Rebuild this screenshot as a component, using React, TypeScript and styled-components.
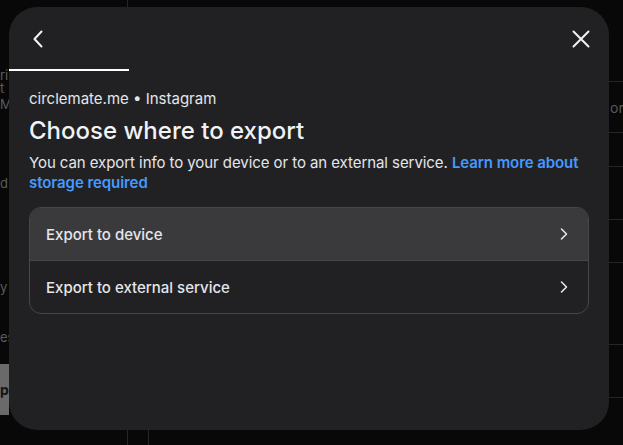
import styled, { createGlobalStyle } from "styled-components";

const GlobalStyle = createGlobalStyle`
  html, body {
    margin: 0;
    padding: 0;
    background: #080808;
    font-family: Inter, "Noto Sans", Roboto, sans-serif;
    -webkit-font-smoothing: antialiased;
  }
  * { box-sizing: border-box; }
`;

const ChevronLeft = () => (
  <svg width="20" height="20" viewBox="0 0 20 20" fill="none">
    <path d="M8.5 2.5 1.5 10l7 7.5" stroke="currentColor" strokeWidth="2" strokeLinecap="round" strokeLinejoin="round" />
  </svg>
);

const CloseIcon = () => (
  <svg width="20" height="20" viewBox="0 0 20 20" fill="none">
    <path d="M2.5 2.5l15 15M17.5 2.5l-15 15" stroke="currentColor" strokeWidth="2" strokeLinecap="round" />
  </svg>
);

const ChevronRight = () => (
  <svg width="10" height="14" viewBox="0 0 10 14" fill="none">
    <path d="M2.5 2 7.5 7l-5 5" stroke="currentColor" strokeWidth="1.6" strokeLinecap="round" strokeLinejoin="round" />
  </svg>
);

// slivers of the page that stay visible around the dialog
const leftEdge = [
  { text: "ri", gap: 69 },
  { text: "t", gap: 0 },
  { text: "M", gap: 3 },
  { text: "d", gap: 66 },
  { text: "y", gap: 91 },
  { text: "es", gap: 37 },
];

const rightRows = [82, 51, 34, 53, 43, 82, 53];

const App = () => {
  return (
    <>
      <GlobalStyle />
      <Page>
        <LeftRail>
          {leftEdge.map((item, i) => (
            <RailText key={i} $gap={item.gap}>
              {item.text}
            </RailText>
          ))}
          <RailButton>p</RailButton>
        </LeftRail>
        <Content>
          <NavColumn />
          <NarrowColumn />
          <div />
        </Content>
        <RightRail>
          {rightRows.map((h, i) => (
            <RailRow key={i} $height={h}>
              {i === 1 ? "or" : ""}
            </RailRow>
          ))}
        </RightRail>
      </Page>

      <Overlay>
        <Dialog>
          <Header>
            <IconButton aria-label="Back">
              <ChevronLeft />
            </IconButton>
            <IconButton aria-label="Close">
              <CloseIcon />
            </IconButton>
          </Header>
          <TabLine />
          <Body>
            <Account>circlemate.me • Instagram</Account>
            <Title>Choose where to export</Title>
            <Description>
              You can export info to your device or to an external service.{" "}
              <LearnMore href="#">Learn more about storage required</LearnMore>
            </Description>
            <OptionList>
              <Option $active>
                <span>Export to device</span>
                <ChevronRight />
              </Option>
              <Option>
                <span>Export to external service</span>
                <ChevronRight />
              </Option>
            </OptionList>
          </Body>
        </Dialog>
      </Overlay>
    </>
  );
};

export default App;

const Page = styled.div`
  width: 623px;
  height: 445px;
  display: grid;
  grid-template-columns: 9px 1fr 14px;
  overflow: hidden;
  color: #5c5c5c;
  font-size: 14px;
`;

const LeftRail = styled.div`
  display: flex;
  flex-direction: column;
  overflow: hidden;
`;

const RailText = styled.div<{ $gap: number }>`
  margin-top: ${(p) => p.$gap}px;
  font-size: 13px;
  line-height: 13px;
  white-space: nowrap;
`;

const RailButton = styled.div`
  margin-top: 20px;
  height: 51px;
  background: #6a6a6a;
  color: #141414;
  font-weight: 700;
  display: flex;
  align-items: center;
`;

const Content = styled.div`
  display: grid;
  grid-template-columns: 119px 21px 1fr;
`;

const NavColumn = styled.div`
  border-right: 1px solid #262626;
`;

const NarrowColumn = styled.div`
  margin-top: 24px;
  border-right: 1px solid #262626;
`;

const RightRail = styled.div`
  display: flex;
  flex-direction: column;
  overflow: hidden;
`;

const RailRow = styled.div<{ $height: number }>`
  height: ${(p) => p.$height}px;
  border-bottom: 1px solid #262626;
  display: flex;
  align-items: center;
  padding-left: 1px;
  color: #5a5a5a;
  white-space: nowrap;
`;

const Overlay = styled.div`
  position: fixed;
  inset: 0;
  padding: 7px 14px 15px 9px;
  display: flex;
`;

const Dialog = styled.div`
  flex: 1;
  background: #212123;
  border-radius: 28px;
  color: #e4e6eb;
  overflow: hidden;
`;

const Header = styled.div`
  height: 62px;
  display: flex;
  align-items: center;
  justify-content: space-between;
  padding: 0 18px 0 24px;
`;

const IconButton = styled.button`
  width: 20px;
  height: 20px;
  border: 0;
  background: none;
  color: #f2f2f2;
  display: flex;
  align-items: center;
  justify-content: center;
  padding: 0;
  margin-top: 2px;
`;

const TabLine = styled.div`
  width: 120px;
  height: 2px;
  background: #ffffff;
`;

const Body = styled.div`
  padding: 18px 20px 0 20px;
`;

const Account = styled.div`
  font-size: 15px;
  line-height: 20px;
  color: #e4e6eb;
`;

const Title = styled.h2`
  margin: 7px 0 0;
  font-size: 24px;
  line-height: 30px;
  font-weight: 500;
  color: #f0f2f5;
`;

const Description = styled.p`
  margin: 7px 0 0;
  font-size: 15px;
  line-height: 20px;
  letter-spacing: -0.07px;
  color: #e4e6eb;
`;

const LearnMore = styled.a`
  color: #4599ff;
  font-weight: 600;
  text-decoration: none;
`;

const OptionList = styled.div`
  margin-top: 14px;
  border: 1px solid #45474b;
  border-radius: 12px;
  overflow: hidden;
`;

const Option = styled.div<{ $active?: boolean }>`
  height: 52px;
  display: flex;
  align-items: center;
  justify-content: space-between;
  padding: 0 19px 0 16px;
  background: ${(p) => (p.$active ? "#3a3a3c" : "transparent")};
  font-size: 15px;
  font-weight: 500;
  color: #e4e6eb;

  & + & {
    height: 53px;
    border-top: 1px solid #45474b;
  }
`;
